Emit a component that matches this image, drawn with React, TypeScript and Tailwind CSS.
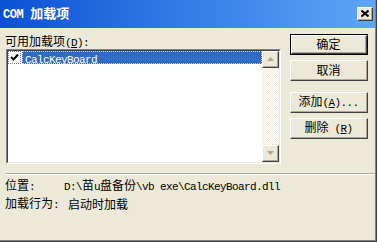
import React from "react";

// split text into ascii / cjk runs so latin gets the half-width mono look
const Txt = ({ s }: { s: string }) => {
  const runs = s.match(/[\x00-\x7f]+|[^\x00-\x7f]+/g) ?? [];
  return (
    <>
      {runs.map((r, i) =>
        /^[\x00-\x7f]/.test(r) ? (
          <span key={i} className="font-['Liberation_Mono',monospace] text-[11px] tracking-[-0.6px] whitespace-pre">
            {r}
          </span>
        ) : (
          <span key={i}>{r}</span>
        )
      )}
    </>
  );
};

const Raised = ({ children, className = "" }: { children?: React.ReactNode; className?: string }) => (
  <div className={`border-t border-l border-white border-r border-b border-r-[#404040] border-b-[#404040] ${className}`}>
    <div className="h-full w-full border-r border-b border-[#aca899] flex items-center justify-center bg-[#ece9d8]">
      {children}
    </div>
  </div>
);

const Button = ({ children, isDefault = false }: { children: React.ReactNode; isDefault?: boolean }) =>
  isDefault ? (
    <div className="h-[21px] w-[78px] border border-black">
      <Raised className="h-full w-full">{children}</Raised>
    </div>
  ) : (
    <Raised className="h-[21px] w-[78px]">{children}</Raised>
  );

const Arrow = ({ up }: { up?: boolean }) => (
  <svg width="7" height="4" viewBox="0 0 7 4" className={up ? "" : "rotate-180"}>
    <path d="M3.5 0 L7 4 L0 4 Z" fill="#aca899" />
  </svg>
);

export default function App() {
  return (
    <div className="w-[377px] h-[242px] border-r border-b border-[#404040] font-['Noto_Sans_CJK_SC',sans-serif] text-[12px] text-black">
      <div className="h-full border-r border-b border-[#848284] flex flex-col bg-[#ece9d8]">
        {/* title bar */}
        <div className="h-[28px] flex items-center justify-between pl-[3px] pr-[2px] bg-gradient-to-r from-[#0a50d4] to-[#5ea6f7]">
          <span className="text-white font-bold text-[13px] leading-[14px]">
            <span className="font-['Liberation_Mono',monospace] text-[12px] tracking-[-0.4px]">COM </span>
            加载项
          </span>
          <Raised className="h-[14px] w-[16px]">
            <svg width="8" height="7" viewBox="0 0 8 7">
              <path d="M0.5 0.5 L7.5 6.5 M7.5 0.5 L0.5 6.5" stroke="black" strokeWidth="2" />
            </svg>
          </Raised>
        </div>

        {/* body */}
        <div className="flex pt-[5px]">
          <div className="ml-[6px] w-[275px] flex flex-col">
            <div className="h-[16px] leading-[16px] -ml-px">
              可用加载项<span className="font-['Liberation_Mono',monospace] text-[11px] tracking-[-0.6px]">(<span className="underline">D</span>):</span>
            </div>
            <div className="h-[115px] border-t border-l border-[#848284] border-r border-b border-r-white border-b-white">
              <div className="h-full border-t border-l border-[#404040] border-r border-b border-r-[#ece9d8] border-b-[#ece9d8] bg-white flex">
                <div className="flex-1">
                  <div className="h-[13px] flex">
                    <div className="w-[13px] h-[13px] border border-dotted border-[#808080] bg-white flex items-center justify-center">
                      <svg width="9" height="9" viewBox="0 0 9 9">
                        <path d="M1 4 L3.5 6.5 L8 1.5" stroke="black" strokeWidth="2" fill="none" />
                      </svg>
                    </div>
                    <div className="flex-1 ml-px bg-[#316ac5] border border-dotted border-[#c9d8f0] text-white leading-[11px] pl-[2px]">
                      <span className="font-['Liberation_Mono',monospace] text-[11px] tracking-[-0.6px]">CalcKeyBoard</span>
                    </div>
                  </div>
                </div>
                <div className="w-[17px] flex flex-col justify-between bg-[repeating-conic-gradient(#ece9d8_0_25%,#ffffff_0_50%)] bg-[length:2px_2px]">
                  <Raised className="h-[17px] w-[17px]">
                    <Arrow up />
                  </Raised>
                  <Raised className="h-[17px] w-[17px]">
                    <Arrow />
                  </Raised>
                </div>
              </div>
            </div>
          </div>

          <div className="ml-[9px] flex flex-col pt-[1px]">
            <Button isDefault>确定</Button>
            <div className="mt-[5px]">
              <Button>取消</Button>
            </div>
            <div className="mt-[11px]">
              <Button>
                <span>
                  添加<span className="font-['Liberation_Mono',monospace] text-[11px] tracking-[-0.6px]">(<span className="underline">A</span>)...</span>
                </span>
              </Button>
            </div>
            <div className="mt-[5px]">
              <Button>
                <span>
                  删除<span className="font-['Liberation_Mono',monospace] text-[11px] tracking-[-0.6px]"> (<span className="underline">R</span>)</span>
                </span>
              </Button>
            </div>
          </div>
        </div>

        {/* separator */}
        <div className="mt-[9px] ml-[6px] border-t border-[#aca899] border-b border-b-white" />

        <div className="ml-[5px] pt-[2px] flex flex-col">
          <div className="flex h-[18px] items-center leading-[18px]">
            <span className="w-[59px]">
              <Txt s="位置:" />
            </span>
            <span>
              <Txt s="D:\苗u盘备份\vb exe\CalcKeyBoard.dll" />
            </span>
          </div>
          <div className="flex h-[18px] items-center leading-[18px]">
            <span className="w-[63px]">
              <Txt s="加载行为:" />
            </span>
            <span>启动时加载</span>
          </div>
        </div>
      </div>
    </div>
  );
}
